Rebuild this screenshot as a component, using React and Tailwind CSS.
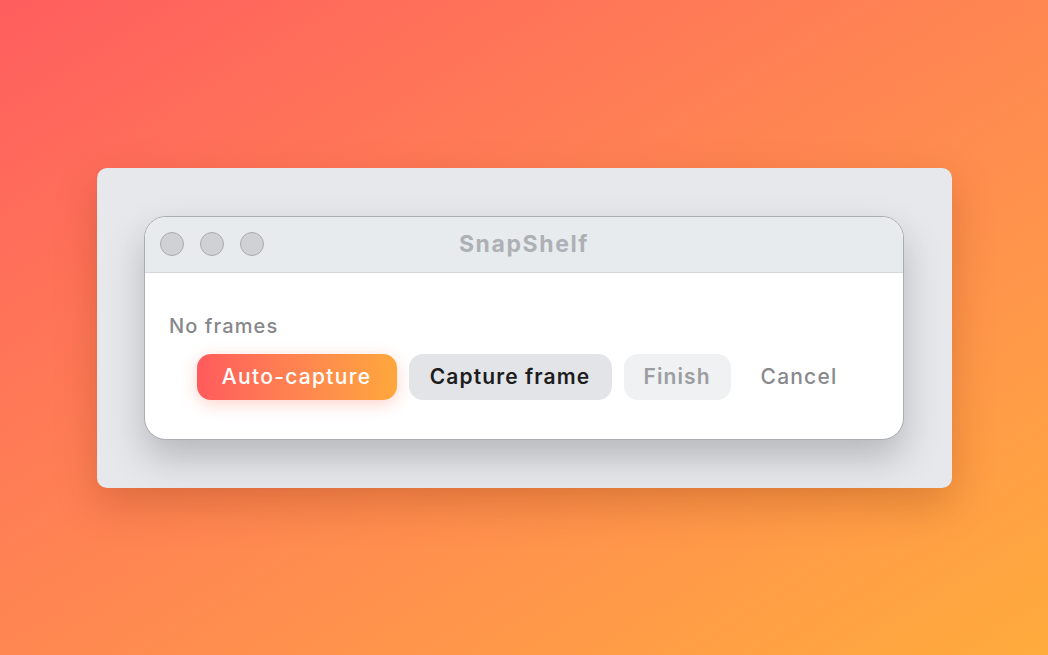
export default function App() {
  return (
    <div
      className="w-[1048px] h-[655px] flex items-center justify-center bg-gradient-to-br from-[#ff5d5e] to-[#ffab3c]"
      style={{ fontFamily: 'Inter, "Noto Sans", sans-serif' }}
    >
      <div className="w-[855px] h-[320px] rounded-[10px] bg-[#e6e8eb] shadow-[0_16px_40px_rgba(120,40,0,0.25)] flex items-center justify-center">
        <div className="w-[760px] rounded-[22px] overflow-hidden bg-white border border-[#a9acb1] shadow-[0_18px_36px_rgba(60,60,70,0.28)]">
          <div className="relative h-[56px] bg-[#e8ebee] border-b border-[#d3d6da] flex items-center px-[15px] gap-4">
            <span className="w-6 h-6 rounded-full bg-[#cfd1d4] border border-[#a9abaf]" />
            <span className="w-6 h-6 rounded-full bg-[#cfd1d4] border border-[#a9abaf]" />
            <span className="w-6 h-6 rounded-full bg-[#cfd1d4] border border-[#a9abaf]" />
            <div className="absolute inset-0 flex items-center justify-center text-[23px] font-bold text-[#adb0b4] tracking-[1.6px]">
              SnapShelf
            </div>
          </div>
          <div className="px-6 pt-[39px] pb-[39px]">
            <div className="text-[20px] leading-7 font-medium text-[#86878b] tracking-[1.1px]">No frames</div>
            <div className="mt-[14px] flex items-center justify-center gap-3 pl-[4px]">
              <button className="h-[46px] w-[200px] rounded-[14px] bg-gradient-to-r from-[#ff5a5c] to-[#ffa73b] text-white text-[21px] font-medium tracking-[1.3px] shadow-[0_4px_16px_rgba(255,110,80,0.3)]">
                Auto-capture
              </button>
              <button className="h-[46px] w-[203px] rounded-[14px] bg-[#e3e4e8] text-[#1d1d20] text-[21px] font-semibold tracking-[1.1px]">
                Capture frame
              </button>
              <button className="h-[46px] w-[107px] rounded-[14px] bg-[#f0f1f2] text-[#9b9da1] text-[21px] font-semibold tracking-[1.1px]">
                Finish
              </button>
              <button className="h-[46px] px-[18px] rounded-[14px] text-[#88898d] text-[21px] font-medium tracking-[1.2px]">
                Cancel
              </button>
            </div>
          </div>
        </div>
      </div>
    </div>
  );
}
